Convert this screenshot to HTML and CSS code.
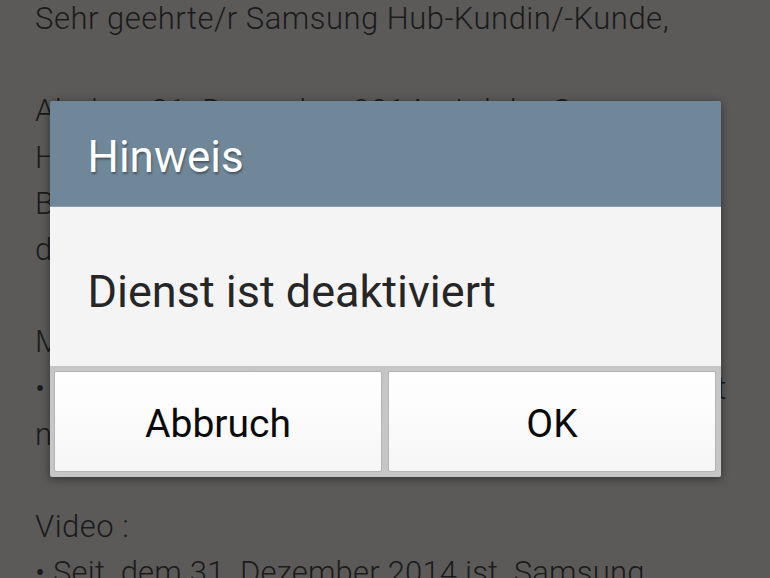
FILE: index.html
```html
<!DOCTYPE html>
<html lang="de">
<head>
<meta charset="utf-8">
<link rel="stylesheet" href="styles.css">
</head>
<body>
<div class="page">
  <div class="line">Sehr geehrte/r Samsung Hub-Kundin/-Kunde,</div>
  <div class="line">&nbsp;</div>
  <div class="line">Ab dem 31. Dezember 2014 wird der Samsung</div>
  <div class="line">Hub-Dienst eingestellt. Wir danken Ihnen</div>
  <div class="line">Bitte beachten Sie die Änderungen für</div>
  <div class="line">die einzelnen Dienste.</div>
  <div class="line">&nbsp;</div>
  <div class="line">Musik :</div>
  <div class="line tight">• Seit dem 31. Dezember 2014 ist Music Hub nicht</div>
  <div class="line">nicht mehr verfügbar.</div>
  <div class="line">&nbsp;</div>
  <div class="line">Video :</div>
  <div class="line tighter">• Seit&nbsp; dem 31. Dezember 2014 ist&nbsp; Samsung</div>
</div>
<div class="dialog">
  <div class="dialog-title">Hinweis</div>
  <div class="dialog-body">Dienst ist deaktiviert</div>
  <div class="dialog-buttons">
    <div class="btn">Abbruch</div>
    <div class="btn">OK</div>
  </div>
</div>
</body>
</html>
```
FILE: styles.css
```css
html, body {
  margin: 0;
  padding: 0;
  width: 770px;
  height: 578px;
  overflow: hidden;
  background: #5b5a58;
}
.page {
  padding-left: 35px;
  margin-top: -4px;
  font-family: Roboto, "Noto Sans", sans-serif;
  font-weight: 300;
  font-size: 31px;
  letter-spacing: 0.5px;
  line-height: 46.2px;
  color: #1b1b1b;
}
.line {
  white-space: nowrap;
  overflow: hidden;
  width: 735px;
}
.tight {
  letter-spacing: 0.3px;
}
.tighter {
  letter-spacing: 0.2px;
}
.dialog {
  position: absolute;
  left: 49.5px;
  top: 101px;
  width: 671px;
  border-radius: 2px;
  overflow: hidden;
  box-shadow: 0 2px 10px rgba(0,0,0,0.45);
  font-family: Roboto, "Noto Sans", sans-serif;
}
.dialog-title {
  height: 105px;
  background: #6f8799;
  border-bottom: 1px solid #8a9eac;
  color: #ffffff;
  font-size: 44px;
  line-height: 113px;
  padding-left: 38px;
  text-shadow: 1px 2px 2px rgba(0,0,0,0.35);
}
.dialog-body {
  height: 159px;
  background: #f4f4f4;
  color: #262626;
  font-size: 45px;
  line-height: 170px;
  padding-left: 38px;
}
.dialog-buttons {
  display: flex;
  gap: 6px;
  padding: 5px 4.5px 5px 4.5px;
  background: #c6c6c6;
}
.btn {
  flex: 1;
  height: 101px;
  box-sizing: border-box;
  border: 1px solid #b4b4b4;
  border-radius: 2px;
  background: linear-gradient(#ffffff, #f6f6f6);
  color: #0a0a0a;
  font-size: 39px;
  display: flex;
  align-items: center;
  justify-content: center;
  padding-top: 4px;
}
```
